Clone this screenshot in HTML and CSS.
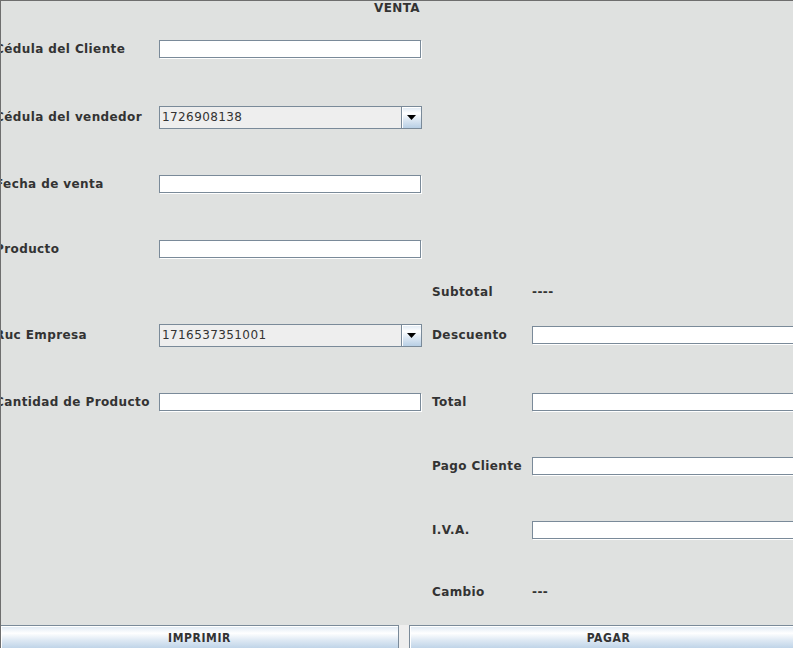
FILE: index.html
```html
<!DOCTYPE html>
<html lang="es">
<head>
<meta charset="utf-8">
<title>Venta</title>
<link rel="stylesheet" href="styles.css">
</head>
<body>
<div class="frame">
  <div class="title">VENTA</div>
  <div class="form">
    <div class="lbl r1">Cédula del Cliente</div>
    <div class="field left r1"></div>

    <div class="lbl r2">Cédula del vendedor</div>
    <div class="combo left r2"><span class="combo-text">1726908138</span><span class="combo-btn"><svg width="9" height="5" viewBox="0 0 9 5"><path d="M0 0H9L4.5 5Z" fill="#000"/></svg></span></div>

    <div class="lbl r3">Fecha de venta</div>
    <div class="field left r3"></div>

    <div class="lbl r4">Producto</div>
    <div class="field left r4"></div>

    <div class="rlbl r5">Subtotal</div>
    <div class="value r5">----</div>

    <div class="lbl r6">Ruc Empresa</div>
    <div class="combo left r6"><span class="combo-text">1716537351001</span><span class="combo-btn"><svg width="9" height="5" viewBox="0 0 9 5"><path d="M0 0H9L4.5 5Z" fill="#000"/></svg></span></div>
    <div class="rlbl r6">Descuento</div>
    <div class="field right r6"></div>

    <div class="lbl r7">Cantidad de Producto</div>
    <div class="field left r7"></div>
    <div class="rlbl r7">Total</div>
    <div class="field right r7"></div>

    <div class="rlbl r8">Pago Cliente</div>
    <div class="field right r8"></div>

    <div class="rlbl r9">I.V.A.</div>
    <div class="field right r9"></div>

    <div class="rlbl r10">Cambio</div>
    <div class="value r10">---</div>
  </div>
  <div class="buttons">
    <button class="btn btn-print">IMPRIMIR</button>
    <button class="btn btn-pay">PAGAR</button>
  </div>
</div>
</body>
</html>
```

FILE: styles.css
```css
html, body {
  margin: 0;
  padding: 0;
}

body {
  width: 793px;
  height: 648px;
  overflow: hidden;
  background: #dfe1e0;
  font-family: "DejaVu Sans", "Liberation Sans", sans-serif;
  font-weight: bold;
  font-size: 12px;
  letter-spacing: 0.4px;
  color: #333333;
}

.frame {
  box-sizing: border-box;
  height: 648px;
  border-top: 1px solid #6e6e6e;
  border-left: 1px solid #6e6e6e;
  display: flex;
  flex-direction: column;
  overflow: hidden;
}

.title {
  height: 16px;
  line-height: 14px;
  text-align: center;
}

.form {
  display: grid;
  margin-left: -6px;
  grid-template-columns: 164px 262px 11px 100px 290px;
  grid-template-rows:
    22px 24px 44px 24px 43px 24px 41px 24px 19px 24px
    19px 24px 43px 24px 40px 24px 40px 24px 38px 24px;
  align-items: center;
}

.r1 { grid-row: 2; }
.r2 { grid-row: 4; }
.r3 { grid-row: 6; }
.r4 { grid-row: 8; }
.r5 { grid-row: 10; }
.r6 { grid-row: 12; }
.r7 { grid-row: 14; }
.r8 { grid-row: 16; }
.r9 { grid-row: 18; }
.r10 { grid-row: 20; }

.lbl {
  grid-column: 1;
  white-space: nowrap;
}

.left { grid-column: 2; }

.rlbl {
  grid-column: 4;
  white-space: nowrap;
}

.value { grid-column: 5; }

.right { grid-column: 5; }

.field {
  box-sizing: border-box;
  height: 18px;
  width: 100%;
  background: #ffffff;
  border: 1px solid #7a8a99;
  box-shadow: 1px 1px 0 #ffffff;
}

.combo {
  box-sizing: border-box;
  height: 23px;
  width: calc(100% + 1px);
  border: 1px solid #7a8a99;
  background: #eeeeee;
  display: flex;
  align-items: stretch;
}

.combo-text {
  flex: 1;
  font-weight: normal;
  padding-left: 2px;
  line-height: 21px;
  color: #333333;
}

.combo-btn {
  width: 19px;
  border-left: 1px solid #7a8a99;
  box-shadow: inset 1px 1px 0 #ffffff;
  background: linear-gradient(#dde8f3 0%, #ffffff 30%, #dde8f3 60%, #b8cfe5 100%);
  display: flex;
  align-items: center;
  justify-content: center;
}

.combo-btn svg {
  display: block;
}

.buttons {
  margin-top: 21px;
  flex: 1;
  display: flex;
  gap: 10px;
  margin-left: -1px;
  background: #eeeeee;
}

.btn {
  flex: none;
  box-sizing: border-box;
  width: 399px;
  height: 26px;
  margin: 0;
  padding: 0;
  border: 1px solid #7a8a99;
  box-shadow: inset 1px 1px 0 #ffffff;
  background: linear-gradient(#dde8f3 0%, #ffffff 30%, #dde8f3 60%, #b8cfe5 100%);
  font-family: "DejaVu Sans Condensed", "DejaVu Sans", sans-serif;
  font-weight: bold;
  font-size: 12px;
  letter-spacing: 0.6px;
  color: #333333;
  line-height: 22px;
  text-align: center;
}
```
